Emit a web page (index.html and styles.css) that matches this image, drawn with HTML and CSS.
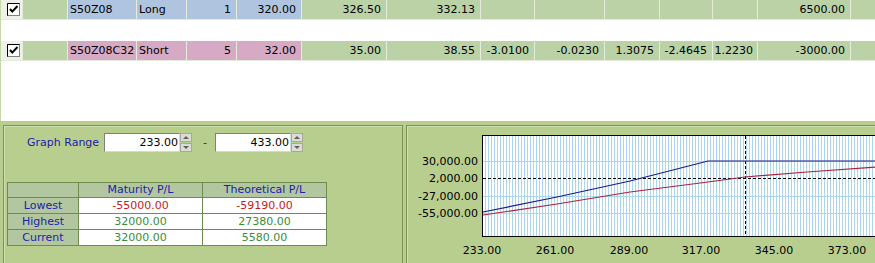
FILE: index.html
```html
<!DOCTYPE html>
<html>
<head>
<meta charset="utf-8">
<link rel="stylesheet" href="styles.css">
</head>
<body>
<div class="page">
  <div class="grid">
    <div class="row">
      <div class="cell chk"><svg width="13" height="13" viewBox="0 0 13 13"><rect x="0.5" y="0.5" width="12" height="12" fill="#fff" stroke="#808080"/><path d="M0.5 12.5V0.5H12.5" fill="none" stroke="#000"/><path d="M3 6l2.3 2.6L10.5 3" fill="none" stroke="#000" stroke-width="2"/></svg></div>
      <div class="cell g w45"></div>
      <div class="cell b w69 left">S50Z08</div>
      <div class="cell b w50 left">Long</div>
      <div class="cell b w50">1</div>
      <div class="cell b w65">320.00</div>
      <div class="cell g w85">326.50</div>
      <div class="cell g w94">332.13</div>
      <div class="cell g w54"></div>
      <div class="cell g w70"></div>
      <div class="cell g w55"></div>
      <div class="cell g w53"></div>
      <div class="cell g w45"></div>
      <div class="cell g w93">6500.00</div>
      <div class="cell g rest"></div>
    </div>
    <div class="blank"></div>
    <div class="row">
      <div class="cell chk"><svg width="13" height="13" viewBox="0 0 13 13"><rect x="0.5" y="0.5" width="12" height="12" fill="#fff" stroke="#808080"/><path d="M0.5 12.5V0.5H12.5" fill="none" stroke="#000"/><path d="M3 6l2.3 2.6L10.5 3" fill="none" stroke="#000" stroke-width="2"/></svg></div>
      <div class="cell g w45"></div>
      <div class="cell p w69 left">S50Z08C32</div>
      <div class="cell p w50 left">Short</div>
      <div class="cell p w50">5</div>
      <div class="cell p w65">32.00</div>
      <div class="cell g w85">35.00</div>
      <div class="cell g w94">38.55</div>
      <div class="cell g w54">-3.0100</div>
      <div class="cell g w70">-0.0230</div>
      <div class="cell g w55">1.3075</div>
      <div class="cell g w53">-2.4645</div>
      <div class="cell g w45 tight">1.2230</div>
      <div class="cell g w93">-3000.00</div>
      <div class="cell g rest"></div>
    </div>
  </div>
  <div class="bottom">
    <div class="panel left-panel">
      <div class="range">
        <span class="range-label">Graph Range</span>
        <div class="spin">
          <div class="spin-box">233.00</div>
          <div class="spin-btns"><div class="sb up"></div><div class="sb down"></div></div>
        </div>
        <span class="dash">-</span>
        <div class="spin">
          <div class="spin-box">433.00</div>
          <div class="spin-btns"><div class="sb up"></div><div class="sb down"></div></div>
        </div>
      </div>
      <table class="pl">
        <tr class="hdr"><td class="c0"></td><td class="c1">Maturity P/L</td><td class="c2">Theoretical P/L</td></tr>
        <tr><td class="lab">Lowest</td><td class="neg">-55000.00</td><td class="neg">-59190.00</td></tr>
        <tr><td class="lab">Highest</td><td class="pos">32000.00</td><td class="pos">27380.00</td></tr>
        <tr><td class="lab">Current</td><td class="pos">32000.00</td><td class="pos">5580.00</td></tr>
      </table>
    </div>
    <div class="panel right-panel">
      <svg class="chart" width="470" height="137" viewBox="0 0 470 137">
        <defs>
          <pattern id="vg" x="75" y="0" width="3" height="10" patternUnits="userSpaceOnUse">
            <rect x="0" y="0" width="1" height="10" fill="#aad6f0"/>
          </pattern>
        </defs>
        <rect x="75" y="9" width="400" height="102" fill="#fff"/>
        <rect x="76" y="10" width="400" height="100" fill="url(#vg)"/>
        <g stroke="#aad6f0" stroke-width="1">
          <line x1="76" y1="35.5" x2="470" y2="35.5"/>
          <line x1="76" y1="70.5" x2="470" y2="70.5"/>
          <line x1="76" y1="87.5" x2="470" y2="87.5"/>
        </g>
        <path d="M75.5 9.5H475M75.5 9V111M75 110.5H475" fill="none" stroke="#000"/>
        <line x1="76" y1="52.5" x2="470" y2="52.5" stroke="#000" stroke-dasharray="3,2"/>
        <line x1="338.5" y1="10" x2="338.5" y2="110" stroke="#000" stroke-dasharray="3,2"/>
        <polyline points="76,86 150,71 223,55 301,35 470,35" fill="none" stroke="#1a1a8c" stroke-width="1.2"/>
        <polyline points="76,89 150,78 223,66 301,56 338,51 400,46 470,41" fill="none" stroke="#b0203c" stroke-width="1.2"/>
        <g class="ylab" text-anchor="end">
          <text x="71" y="39">30,000.00</text>
          <text x="71" y="56">2,000.00</text>
          <text x="71" y="74">-27,000.00</text>
          <text x="71" y="91">-55,000.00</text>
        </g>
        <g class="xlab" text-anchor="middle">
          <text x="75" y="128">233.00</text>
          <text x="148" y="128">261.00</text>
          <text x="222" y="128">289.00</text>
          <text x="294" y="128">317.00</text>
          <text x="367" y="128">345.00</text>
          <text x="440" y="128">373.00</text>
        </g>
      </svg>
    </div>
  </div>
</div>
</body>
</html>
```

FILE: styles.css
```css
html, body {
  margin: 0;
  padding: 0;
  background: #fff;
}
.page {
  width: 875px;
  height: 263px;
  overflow: hidden;
  font-family: "DejaVu Sans", Verdana, sans-serif;
  font-size: 11px;
  color: #000;
}
.grid {
  height: 121px;
  background: #fff;
  border-left: 1px solid #c4d8a8;
  box-sizing: border-box;
}
.row {
  display: flex;
  height: 20px;
}
.blank {
  height: 21px;
}
.cell {
  box-sizing: border-box;
  height: 20px;
  border-right: 1px solid #e4ecdc;
  border-bottom: 1px solid #e4ecdc;
  display: flex;
  align-items: center;
  justify-content: flex-end;
  padding-right: 5px;
  overflow: hidden;
  white-space: nowrap;
  flex: none;
}
.cell.tight {
  padding-right: 4px;
}
.cell.left {
  justify-content: flex-start;
  padding-left: 2px;
  padding-right: 0;
}
.chk {
  width: 22px;
  background: #eef0ea;
  justify-content: flex-start;
  padding: 0 0 0 6px;
}
.chk svg { display: block; }
.g { background: #bad2a6; }
.b { background: #afc4df; }
.p { background: #d6aac4; }
.w45 { width: 45px; }
.w50 { width: 50px; }
.w53 { width: 53px; }
.w54 { width: 54px; }
.w55 { width: 55px; }
.w65 { width: 65px; }
.w69 { width: 69px; }
.w70 { width: 70px; }
.w85 { width: 85px; }
.w93 { width: 93px; }
.w94 { width: 94px; }
.rest { width: 40px; }

.bottom {
  height: 142px;
  background: #b8ce8e;
  display: flex;
  gap: 3px;
  padding: 4px 0 0 3px;
  box-sizing: border-box;
  overflow: hidden;
}
.panel {
  border: 1px solid #7a9552;
  box-shadow: inset 1px 1px 0 #cfe0b0;
  box-sizing: border-box;
  height: 160px;
  flex: none;
}
.left-panel {
  width: 400px;
  padding: 7px 0 0 3px;
}
.right-panel {
  width: 520px;
}
.range {
  display: flex;
  align-items: center;
  height: 19px;
  padding-left: 20px;
}
.range-label {
  color: #1c22a8;
  margin-right: 5px;
}
.spin {
  display: flex;
  height: 19px;
}
.spin-box {
  width: 76px;
  height: 19px;
  box-sizing: border-box;
  background: #fff;
  border: 1px solid #7f7f7f;
  border-right-color: #d8d8d8;
  border-bottom-color: #d8d8d8;
  text-align: right;
  padding-right: 1px;
  line-height: 17px;
}
.spin-btns {
  width: 12px;
  display: flex;
  flex-direction: column;
  gap: 1px;
}
.sb {
  flex: 1;
  background: #dcdcd6;
  border: 1px solid #a8a8a0;
  position: relative;
}
.sb::after {
  content: "";
  position: absolute;
  left: 2px;
  width: 0;
  height: 0;
  border-left: 3px solid transparent;
  border-right: 3px solid transparent;
}
.sb.up::after {
  top: 2px;
  border-bottom: 3px solid #606060;
}
.sb.down::after {
  top: 2px;
  border-top: 3px solid #606060;
}
.dash {
  color: #1c22a8;
  margin: 0 8px 0 11px;
}
.pl {
  border-collapse: collapse;
  margin-top: 30px;
  table-layout: fixed;
}
.pl td {
  border: 1px solid #6f8c4f;
  padding: 0;
  height: 15px;
  line-height: 14px;
  text-align: center;
  background: #fff;
}
.pl .hdr td {
  height: 14px;
  background: #b2c7a0;
  color: #1c22a8;
}
.pl .c0 { width: 70px; }
.pl .c1 { width: 123px; }
.pl .c2 { width: 123px; }
.pl td.lab {
  background: #b2c7a0;
  color: #1c22a8;
}
.pl td.neg { color: #c41a22; }
.pl td.pos { color: #3a8c3a; }

.chart {
  display: block;
}
.chart text {
  font-family: "DejaVu Sans", Verdana, sans-serif;
  font-size: 11px;
  fill: #000;
}
```
